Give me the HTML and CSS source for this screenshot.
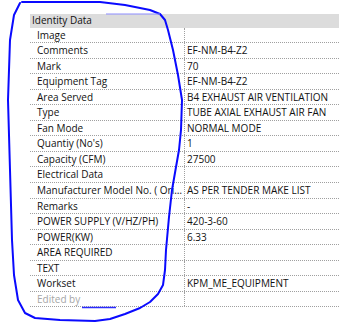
FILE: index.html
```html
<!DOCTYPE html>
<html lang="en">
<head>
<meta charset="UTF-8">
<title>Properties</title>
<link rel="stylesheet" href="styles.css">
</head>
<body>
<div class="props">
    <div class="group">Identity Data</div>
    <div class="row"><div class="name">Image</div><div class="val"></div></div>
    <div class="row"><div class="name">Comments</div><div class="val">EF-NM-B4-Z2</div></div>
    <div class="row"><div class="name">Mark</div><div class="val">70</div></div>
    <div class="row"><div class="name">Equipment Tag</div><div class="val">EF-NM-B4-Z2</div></div>
    <div class="row"><div class="name">Area Served</div><div class="val">B4 EXHAUST AIR VENTILATION</div></div>
    <div class="row"><div class="name">Type</div><div class="val">TUBE AXIAL EXHAUST AIR FAN</div></div>
    <div class="row"><div class="name">Fan Mode</div><div class="val">NORMAL MODE</div></div>
    <div class="row"><div class="name">Quantiy (No's)</div><div class="val">1</div></div>
    <div class="row"><div class="name">Capacity (CFM)</div><div class="val">27500</div></div>
    <div class="row"><div class="name">Electrical Data</div><div class="val"></div></div>
    <div class="row"><div class="name">Manufacturer Model No. ( Origin )</div><div class="val">AS PER TENDER MAKE LIST</div></div>
    <div class="row"><div class="name">Remarks</div><div class="val">-</div></div>
    <div class="row"><div class="name">POWER SUPPLY (V/HZ/PH)</div><div class="val">420-3-60</div></div>
    <div class="row"><div class="name">POWER(KW)</div><div class="val">6.33</div></div>
    <div class="row"><div class="name">AREA REQUIRED</div><div class="val"></div></div>
    <div class="row"><div class="name">TEXT</div><div class="val"></div></div>
    <div class="row"><div class="name">Workset</div><div class="val">KPM_ME_EQUIPMENT</div></div>
    <div class="row off"><div class="name">Edited by</div><div class="val"></div></div>
</div>

<!-- hand drawn markup over the list -->
<svg class="markup" width="353" height="328" viewBox="0 0 353 328">
    <polyline class="pen" points="22,2 60,2 100,2 125,5 150,10 160,14 165,20 168,30 173,50 178,75 182,100 181,130 179,150 176,167 172,190 169,217 166,250 165,270 163,285 158,294 150,302 140,308 125,314 110,319 95,321 60,320 35,318 25,313 18,300 14,275 12,240 10,170 8,100 10,40 14,15 20,3"/>
    <line class="pen-light" x1="106" y1="14" x2="160" y2="14"/>
    <line class="pen-mid" x1="82" y1="307.5" x2="116" y2="307.5"/>
</svg>
</body>
</html>
```

FILE: styles.css
```css
body{
    margin: 0;
    background-color: #fff;
    font-family: "Open Sans", sans-serif;
    font-size: 10px;
    color: #111;
}
.props{
    width: 309px;
    padding: 14px 0 0 30px;
}
.group{
    height: 13.5px;
    line-height: 13.5px;
    padding-left: 2px;
    background-color: #dcdcdc;
}
.row{
    display: grid;
    grid-template-columns: 155px 154px;
    height: 15.55px;
    line-height: 14.5px;
    border-bottom: 1px dotted #a0a0a0;
    box-sizing: border-box;
}
.name{
    padding-left: 7px;
    border-right: 1px dotted #a0a0a0;
    white-space: nowrap;
    overflow: hidden;
    text-overflow: ellipsis;
}
.val{
    padding-left: 2px;
    white-space: nowrap;
    overflow: hidden;
}
.off .name{
    color: #a6a6a6;
}
.markup{
    position: absolute;
    left: 0;
    top: 0;
    pointer-events: none;
}
.pen{
    fill: none;
    stroke: #0a0aff;
    stroke-width: 2;
    stroke-linejoin: round;
    stroke-linecap: round;
}
.pen-light{
    stroke: #8c8cff;
    stroke-width: 1;
}
.pen-mid{
    stroke: #2a2aff;
    stroke-width: 1.5;
}
```
